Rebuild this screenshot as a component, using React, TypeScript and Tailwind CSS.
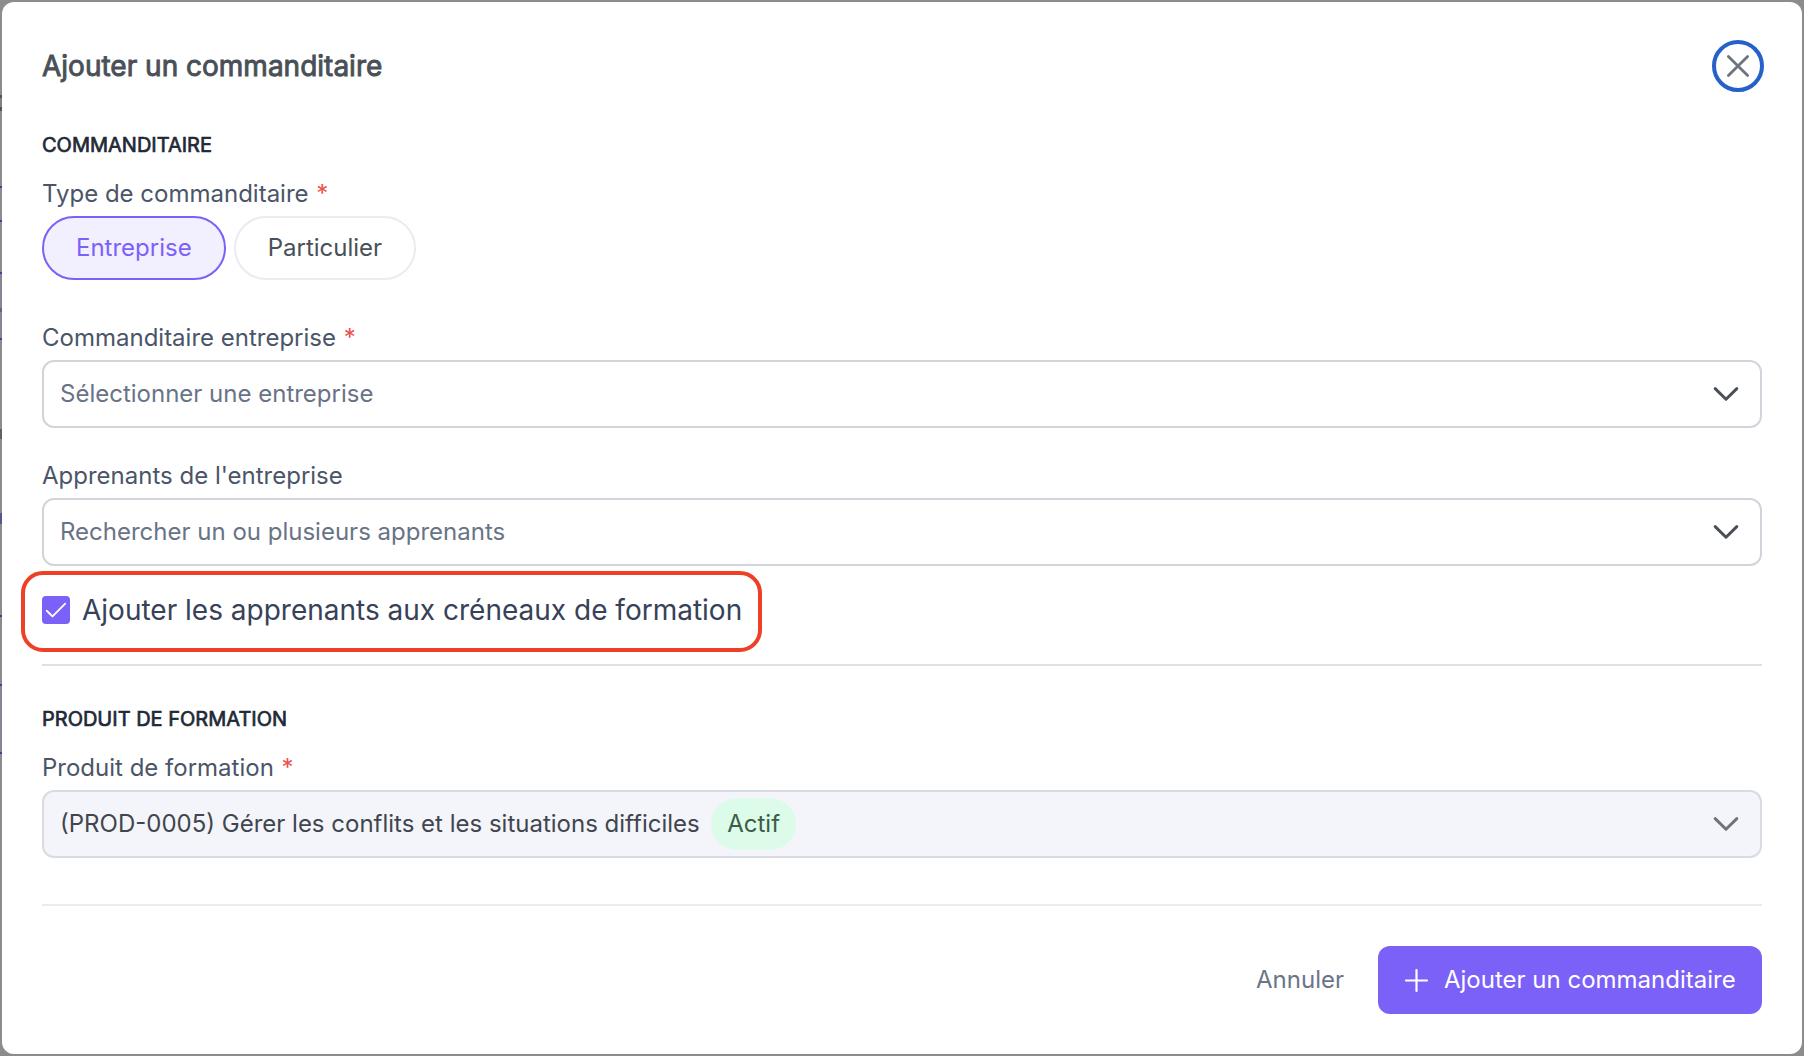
import type { ReactNode } from "react";

type Segment = { height: number; tone: string };

// Sliver of the dimmed page that stays visible left of the dialog.
const backdropEdge: Segment[] = [
  { height: 95, tone: "bg-[#8c8c8c]" },
  { height: 3, tone: "bg-[#51555b]" },
  { height: 9, tone: "bg-[#808183]" },
  { height: 4, tone: "bg-[#51555b]" },
  { height: 75, tone: "bg-[#8c8c8c]" },
  { height: 2, tone: "bg-[#4a3aa0]" },
  { height: 32, tone: "bg-[#8c8c8c]" },
  { height: 2, tone: "bg-[#4a3aa0]" },
  { height: 50, tone: "bg-[#8c8c8c]" },
  { height: 2, tone: "bg-[#4a3aa0]" },
  { height: 34, tone: "bg-[#868590]" },
  { height: 4, tone: "bg-[#66676f]" },
  { height: 26, tone: "bg-[#868590]" },
  { height: 2, tone: "bg-[#4a3aa0]" },
  { height: 89, tone: "bg-[#8c8c8c]" },
  { height: 10, tone: "bg-[#5f6166]" },
  { height: 74, tone: "bg-[#8c8c8c]" },
  { height: 11, tone: "bg-[#55578c]" },
  { height: 91, tone: "bg-[#8c8c8c]" },
  { height: 2, tone: "bg-[#3c3f80]" },
  { height: 67, tone: "bg-[#8c8c8c]" },
  { height: 2, tone: "bg-[#4a3aa0]" },
  { height: 66, tone: "bg-[#868590]" },
  { height: 2, tone: "bg-[#4a3aa0]" },
];

function SectionTitle({ children }: { children: ReactNode }) {
  return (
    <h3 className="text-[20px] leading-7 font-normal text-[#1f2937] uppercase [-webkit-text-stroke:0.7px_#1f2937]">
      {children}
    </h3>
  );
}

function Label({ children, required = false }: { children: ReactNode; required?: boolean }) {
  return (
    <div className="mb-1 text-[24px] leading-9 whitespace-pre text-[#4b5568]">
      {children}
      {required && <span className="ml-px text-[#f04f4a]"> *</span>}
    </div>
  );
}

function Select({ children, disabled = false }: { children: ReactNode; disabled?: boolean }) {
  return (
    <div
      className={
        disabled
          ? "flex h-[68px] items-center rounded-xl border-2 border-[#d9dbe2] bg-[#f4f5fa] pr-[21px] pl-4 text-[24px] leading-9 text-[#41454f]"
          : "flex h-[68px] items-center rounded-xl border-2 border-[#d1d5db] bg-white pr-[21px] pl-4 text-[24px] leading-9 text-[#697386]"
      }
    >
      <div className="flex flex-1 items-center">{children}</div>
      <svg
        width="26"
        height="16"
        viewBox="0 0 26 16"
        fill="none"
        strokeWidth="3"
        strokeLinecap="round"
        strokeLinejoin="round"
        className={disabled ? "stroke-[#6f737b]" : "stroke-[#495057]"}
      >
        <path d="M2.2 2.6 13 13.2 23.8 2.6" />
      </svg>
    </div>
  );
}

export default function App() {
  return (
    <div className="relative h-[1056px] w-[1804px] overflow-hidden bg-[#8c8c8c] p-0.5 font-[Inter,sans-serif]">
      <div className="absolute top-0 left-0 flex w-0.5 flex-col">
        {backdropEdge.map((s, i) => (
          <div key={i} className={s.tone} style={{ height: s.height }} />
        ))}
      </div>

      <div className="h-[1052px] rounded-xl bg-white px-10 pt-[38px]">
        <header className="flex h-[52px] items-center justify-between">
          <h2 className="text-[28px] leading-10 font-normal text-[#495057] [-webkit-text-stroke:0.9px_#495057]">
            Ajouter un commanditaire
          </h2>
          <button
            aria-label="Fermer"
            className="-mr-0.5 flex size-[52px] items-center justify-center rounded-full border-4 border-[#2560cb]"
          >
            <svg width="24" height="24" viewBox="0 0 24 24" fill="none" stroke="#6c757d" strokeWidth="2.8" strokeLinecap="round">
              <path d="M2.4 2.4 21.6 21.6M21.6 2.4 2.4 21.6" />
            </svg>
          </button>
        </header>

        <section className="mt-[39px]">
          <SectionTitle>Commanditaire</SectionTitle>
          <div className="mt-[17px]">
            <Label required>Type de commanditaire</Label>
            <div className="flex gap-2 text-[24px] leading-9">
              <button className="h-16 rounded-full border-2 border-[#7b61f8] bg-[#f2effe] px-8 text-[#7b61f8]">
                Entreprise
              </button>
              <button className="h-16 rounded-full border-2 border-[#ebebf0] bg-white px-8 text-[#495057]">
                Particulier
              </button>
            </div>
          </div>
          <div className="mt-10">
            <Label required>Commanditaire entreprise</Label>
            <Select>Sélectionner une entreprise</Select>
          </div>
          <div className="mt-[30px]">
            <Label>Apprenants de l'entreprise</Label>
            <Select>Rechercher un ou plusieurs apprenants</Select>
          </div>
          <div className="relative mt-6 flex h-10 items-center gap-3">
            <div className="absolute -top-[19px] -left-[21px] h-[81px] w-[741px] rounded-[22px] border-4 border-[#ee4027]" />
            <span className="size-7 rounded bg-[#7b61f8]">
              <svg width="28" height="28" viewBox="0 0 28 28" fill="none" stroke="white" strokeWidth="1.9" strokeLinecap="round" strokeLinejoin="round">
                <path d="M4.7 14.8 10.5 20.4 23.2 7.7" />
              </svg>
            </span>
            <span className="text-[28px] leading-10 text-[#374157]">
              Ajouter les apprenants aux créneaux de formation
            </span>
          </div>
        </section>

        <hr className="mt-[34px] border-t-2 border-[#dee2e6]" />

        <section className="mt-[39px]">
          <SectionTitle>Produit de formation</SectionTitle>
          <div className="mt-[17px]">
            <Label required>Produit de formation</Label>
            <Select disabled>
              (PROD-0005) Gérer les conflits et les situations difficiles
              <span className="ml-[11.5px] flex h-[52px] items-center rounded-full bg-[#dcfbe8] px-4 text-[#3f5a47]">
                Actif
              </span>
            </Select>
          </div>
        </section>

        <hr className="mt-[46px] border-t-2 border-[#ebebf0]" />

        <footer className="mt-10 flex items-center justify-end gap-[34px] text-[24px] leading-9">
          <button className="text-[#6b7588]">Annuler</button>
          <button className="flex h-[68px] w-[384px] items-center gap-[15px] rounded-xl bg-[#7b61f8] pl-[26px] text-white">
            <svg width="25" height="25" viewBox="0 0 25 25" fill="none" stroke="white" strokeWidth="2.2" strokeLinecap="round">
              <path d="M12.5 2V23M2 12.5H23" />
            </svg>
            Ajouter un commanditaire
          </button>
        </footer>
      </div>
    </div>
  );
}
